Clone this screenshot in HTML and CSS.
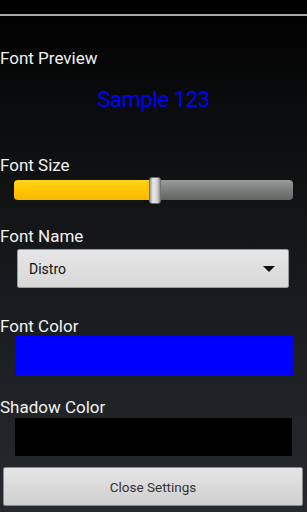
FILE: index.html
```html
<!DOCTYPE html>
<html lang="en">
  <head>
    <meta charset="UTF-8" />
    <meta name="viewport" content="width=device-width, initial-scale=1.0" />
    <title>Font Settings</title>
    <link rel="stylesheet" href="styles.css">
  </head>
  <body>
    <!-- 顶部栏 -->
    <div class="topbar"></div>
    <div class="settings">
      <div class="label preview-label">Font Preview</div>
      <div class="preview">Sample 123</div>

      <div class="label size-label">Font Size</div>
      <div class="slider">
        <div class="slider-fill"></div>
        <div class="slider-thumb"></div>
        <div class="slider-rest"></div>
      </div>

      <div class="label name-label">Font Name</div>
      <div class="dropdown">
        <span class="dropdown-text">Distro</span>
        <span class="dropdown-arrow"></span>
      </div>

      <div class="label color-label">Font Color</div>
      <div class="swatch font-swatch"></div>

      <div class="label shadow-label">Shadow Color</div>
      <div class="swatch shadow-swatch"></div>

      <div class="close-btn">Close Settings</div>
    </div>
  </body>
</html>
```

FILE: styles.css
```css
html,
body {
  margin: 0;
  padding: 0;
}

body {
  width: 307px;
  height: 512px;
  overflow: hidden;
  background: linear-gradient(#000000 0%, #0a0b0c 20%, #1b1e21 65%, #262a2e 100%);
  font-family: Roboto, "Liberation Sans", sans-serif;
  color: #f2f2f2;
}

/* 顶部黑条和分隔线 */
.topbar {
  height: 14px;
  background-color: #000;
  border-bottom: 2px solid #a9a9a9;
}

.settings {
  display: flex;
  flex-direction: column;
}

.label {
  font-size: 17px;
  line-height: 20px;
  height: 20px;
}

.preview-label {
  margin-top: 32px;
}

.preview {
  margin-top: 19px;
  height: 26px;
  line-height: 26px;
  font-size: 22px;
  color: #0000ff;
  text-align: center;
  letter-spacing: -0.4px;
}

.size-label {
  margin-top: 42px;
}

/* 滑块 */
.slider {
  margin: 5px 14px 0 14px;
  height: 20px;
  display: flex;
  align-items: center;
}

.slider-fill {
  width: 136px;
  height: 20px;
  border-radius: 4px 0 0 4px;
  background: linear-gradient(#ffd21a, #ffc400 60%, #f5b800);
}

.slider-rest {
  flex: 1;
  height: 20px;
  border-radius: 0 4px 4px 0;
  background: linear-gradient(#9a9c9a, #7c7e7c 50%, #626462);
}

.slider-thumb {
  width: 10px;
  height: 25px;
  margin: 0 -1px;
  z-index: 1;
  border-radius: 3px;
  border: 1px solid #707070;
  background: linear-gradient(90deg, #9a9a9a, #e8e8e8 30%, #d4d4d4 70%, #8e8e8e);
}

.name-label {
  margin-top: 26px;
}

/* 下拉框 */
.dropdown {
  margin: 3px 18px 0 17px;
  height: 39px;
  box-sizing: border-box;
  border: 1px solid #9a9a9a;
  border-radius: 2px;
  background: linear-gradient(#e6e6e6, #d8d8d8);
  display: flex;
  align-items: center;
  justify-content: space-between;
  padding: 0 13px 0 11px;
}

.dropdown-text {
  font-size: 14px;
  color: #111;
}

.dropdown-arrow {
  width: 0;
  height: 0;
  border-left: 6px solid transparent;
  border-right: 6px solid transparent;
  border-top: 6px solid #111;
}

.color-label {
  margin-top: 28px;
}

.swatch {
  margin: 0 14px 0 15px;
  height: 39px;
}

.font-swatch {
  background-color: #0000ff;
}

.shadow-label {
  margin-top: 22px;
}

.shadow-swatch {
  margin-top: 1px;
  height: 38px;
  margin-right: 15px;
  background-color: #000;
}

/* 关闭按钮 */
.close-btn {
  margin: 11px 4px 0 3px;
  height: 39px;
  box-sizing: border-box;
  border: 1px solid #8a8a8a;
  border-radius: 2px;
  background: linear-gradient(#e4e4e4, #d0d0d0);
  color: #333;
  font-size: 13.5px;
  display: flex;
  justify-content: center;
  align-items: center;
}
```
